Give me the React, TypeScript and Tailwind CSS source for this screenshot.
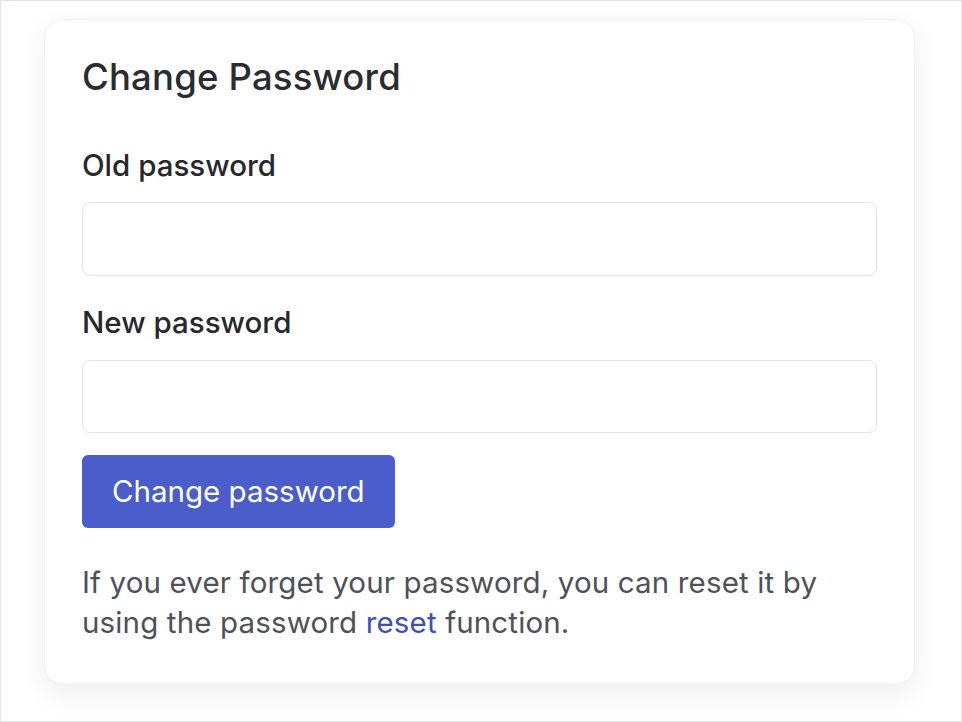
const App = () => {
  return (
    <div
      className="w-[962px] h-[722px] border border-[#dfe4ee] bg-white overflow-hidden"
      style={{ fontFamily: "Inter, 'Noto Sans', sans-serif" }}
    >
      {/* Card */}
      <div className="ml-[43px] mt-[18px] w-[871px] h-[665px] bg-white rounded-[18px] border border-[#f1f1f3] shadow-[0_10px_30px_rgba(0,0,0,0.07)] px-[37px] pt-[36px] pb-[40px] flex flex-col">
        <h2 className="text-[36.5px] leading-[42px] font-medium text-[#2a2c31] tracking-[0.005em]">Change Password</h2>

        <label className="mt-[50px] text-[29.5px] leading-[34px] font-medium text-[#26282d]">Old password</label>
        <input
          type="password"
          className="mt-[20px] h-[74px] w-full rounded-[8px] border border-[#e4e5e8] bg-white outline-none"
        />

        <label className="mt-[29px] text-[29.5px] leading-[34px] font-medium text-[#26282d]">New password</label>
        <input
          type="password"
          className="mt-[21px] h-[73px] w-full rounded-[8px] border border-[#e4e5e8] bg-white outline-none"
        />

        <div className="mt-[22px]">
          <button className="h-[73px] px-[30px] rounded-[6px] bg-[#4a5dcb] text-white text-[29.5px] leading-none">
            Change password
          </button>
        </div>

        <p className="mt-[34px] text-[29.5px] leading-[40px] text-[#4d5158] tracking-[0.005em]">
          If you ever forget your password, you can reset it by
          <br />
          using the password <a className="text-[#3d4fb6]">reset</a> function.
        </p>
      </div>
    </div>
  );
};

export default App;
